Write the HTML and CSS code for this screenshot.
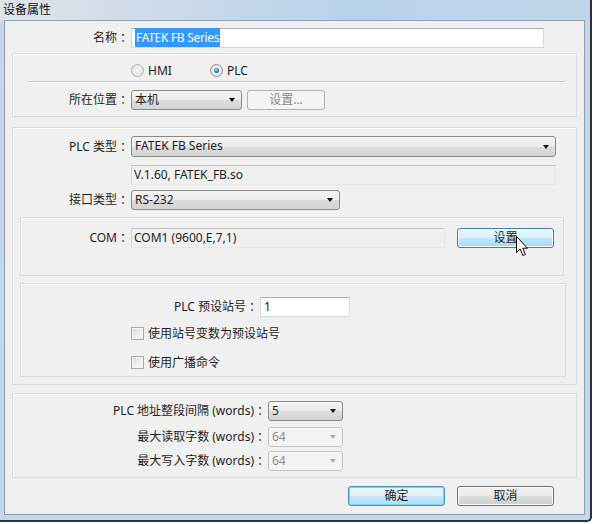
FILE: index.html
```html
<!DOCTYPE html>
<html lang="zh-CN">
<head>
    <meta charset="UTF-8">
    <meta name="viewport" content="width=device-width, initial-scale=1.0">
    <title>设备属性</title>
    <link rel="stylesheet" href="styles.css">
</head>
<body>
<div class="window">
    <div class="titlebar"><span class="title">设备属性</span></div>
    <div class="client">

        <div class="row name-row">
            <span class="lbl">名称<span class="colon">：</span></span>
            <div class="edit name-edit"><span class="selected">FATEK FB Series</span></div>
        </div>

        <div class="group g1">
            <div class="radios">
                <span class="radio"><i class="dot"></i>HMI</span>
                <span class="radio on"><i class="dot"></i>PLC</span>
            </div>
            <div class="sep"></div>
            <div class="row">
                <span class="lbl">所在位置<span class="colon">：</span></span>
                <div class="combo loc-combo">本机<i class="arrow"></i></div>
                <div class="btn disabled loc-btn">设置...</div>
            </div>
        </div>

        <div class="group g2">
            <div class="row tall">
                <span class="lbl">PLC 类型<span class="colon">：</span></span>
                <div class="combo plc-combo">FATEK FB Series<i class="arrow"></i></div>
            </div>
            <div class="row version-row">
                <span class="lbl"></span>
                <div class="readonly plc-combo">V.1.60, FATEK_FB.so</div>
            </div>
            <div class="row port-row">
                <span class="lbl">接口类型<span class="colon">：</span></span>
                <div class="combo port-combo">RS-232<i class="arrow"></i></div>
            </div>

            <div class="group inner com-group">
                <div class="row">
                    <span class="lbl">COM<span class="colon">：</span></span>
                    <div class="readonly com-box">COM1 (9600,E,7,1)</div>
                    <div class="btn hover com-btn">设置</div>
                </div>
                <svg class="cursor" width="13" height="21" viewBox="0 0 13 21">
                    <path d="M0.5 0.5 L0.5 16.5 L4.2 13 L6.8 19.5 L9.3 18.5 L6.8 12.2 L11.5 12.2 Z" fill="#fff" stroke="#000" stroke-width="1"/>
                </svg>
            </div>

            <div class="group inner station-group">
                <div class="row">
                    <span class="lbl">PLC 预设站号<span class="colon">：</span></span>
                    <div class="edit station-edit">1</div>
                </div>
                <div class="check first"><i class="box"></i>使用站号变数为预设站号</div>
                <div class="check second"><i class="box"></i>使用广播命令</div>
            </div>
        </div>

        <div class="group g3">
            <div class="row">
                <span class="lbl">PLC 地址整段间隔 (words)<span class="colon">：</span></span>
                <div class="combo words-combo">5<i class="arrow"></i></div>
            </div>
            <div class="row read-row">
                <span class="lbl">最大读取字数 (words)<span class="colon">：</span></span>
                <div class="combo disabled words-combo">64<i class="arrow"></i></div>
            </div>
            <div class="row write-row">
                <span class="lbl">最大写入字数 (words)<span class="colon">：</span></span>
                <div class="combo disabled words-combo">64<i class="arrow"></i></div>
            </div>
        </div>

        <div class="buttons">
            <div class="btn default">确定</div>
            <div class="btn">取消</div>
        </div>
    </div>
</div>
</body>
</html>
```

FILE: styles.css
```css
body {
    margin: 0;
    width: 600px;
    height: 524px;
    overflow: hidden;
    background-color: #ffffff;
    font-family: "Noto Sans", "Noto Sans CJK SC", sans-serif;
    font-size: 12px;
    color: #1e1e1e;
}
.window {
    width: 590px;
    height: 520px;
    background: linear-gradient(to bottom, #c9d6e4, #c3d8ec);
    border-right: 2px solid #2e3136;
    border-bottom: 2px solid #2e3136;
    border-bottom-right-radius: 5px;
    display: flex;
    flex-direction: column;
}
.titlebar {
    height: 20px;
    background: linear-gradient(to right, #dfe4ea 0%, #cfdbe8 25%, #b9d2ec 60%, #c2d6ea 100%);
    display: flex;
    align-items: center;
}
.title {
    padding-left: 3px;
    font-size: 12px;
    color: #111;
    line-height: 18px;
}
.client {
    box-sizing: border-box;
    width: 581px;
    height: 495px;
    margin-left: 4px;
    background-color: #f0f0f0;
    border: 1px solid #8d9eb0;
    padding-top: 7px;
    display: flex;
    flex-direction: column;
}
.row {
    display: flex;
    align-items: center;
    height: 20px;
    gap: 2px;
}
.row.tall {
    height: 21px;
}
.lbl {
    flex: none;
    text-align: right;
    white-space: nowrap;
    line-height: 20px;
}
.colon {
    margin-left: 3px;
    letter-spacing: -3px;
}
.name-row .lbl {
    width: 124px;
}
.group {
    box-sizing: border-box;
    margin: 0 7px;
    border: 1px solid #dcdcdc;
    box-shadow: inset 1px 1px 0 #fbfbfb;
}
.group .lbl {
    width: 116px;
}

/* edits */
.edit {
    box-sizing: border-box;
    height: 20px;
    background-color: #fff;
    border: 1px solid #d4dae2;
    border-top-color: #abadb3;
    padding-left: 3px;
    line-height: 18px;
}
.name-edit {
    width: 413px;
}
.selected {
    background-color: #3399ff;
    color: #fff;
    padding: 1px 1px;
    letter-spacing: -0.3px;
}
.readonly {
    box-sizing: border-box;
    height: 20px;
    border: 1px solid #e6e6e6;
    border-top-color: #c2c2c2;
    border-left-color: #d2d2d2;
    padding-left: 2px;
    line-height: 18px;
}

/* combos */
.combo {
    box-sizing: border-box;
    position: relative;
    height: 100%;
    border: 1px solid #8a8a8a;
    border-radius: 3px;
    background: linear-gradient(to bottom, #f4f4f4 0%, #ebebeb 50%, #dcdcdc 51%, #d4d4d4 100%);
    padding-left: 3px;
    line-height: 18px;
}
.combo .arrow {
    position: absolute;
    right: 6px;
    top: 50%;
    margin-top: -2px;
    width: 0;
    height: 0;
    border-left: 3.5px solid transparent;
    border-right: 3.5px solid transparent;
    border-top: 4px solid #111;
}
.combo.disabled {
    background: #f4f4f4;
    border-color: #c3c6c9;
    color: #8a8a8a;
}
.combo.disabled .arrow {
    border-top-color: #a9a9a9;
}

/* buttons */
.btn {
    box-sizing: border-box;
    height: 20px;
    border: 1px solid #707070;
    border-radius: 3px;
    background: linear-gradient(to bottom, #f2f2f2 0%, #ebebeb 50%, #dddddd 51%, #cfcfcf 100%);
    text-align: center;
    line-height: 18px;
    box-shadow: inset 0 0 0 1px #fcfcfc;
}
.btn.disabled {
    border-color: #adb2b5;
    background: #f4f4f4;
    color: #8b8b8b;
    box-shadow: none;
}
.btn.hover {
    border-color: #3c7fb1;
    background: linear-gradient(to bottom, #eaf6fd 0%, #d9f0fc 50%, #bee6fd 51%, #a7d9f5 100%);
}
.btn.default {
    border-color: #3c96c4;
    background: linear-gradient(to bottom, #eaf6fd 0%, #dff1fb 50%, #c7e6f7 51%, #b4dcf2 100%);
    box-shadow: inset 0 0 0 1px #7fd3f5;
}

/* group 1 */
.g1 {
    margin-top: 5px;
    padding: 8px 0 6px;
}
.radios {
    height: 16px;
    display: flex;
    align-items: center;
    padding-left: 118px;
}
.radio {
    display: flex;
    align-items: center;
    gap: 4px;
    width: 79px;
}
.radio .dot {
    box-sizing: border-box;
    width: 13px;
    height: 13px;
    border-radius: 50%;
    border: 1px solid #b0b0b0;
    background: radial-gradient(circle, #f3f3f3 0%, #e2e2e2 100%);
    position: relative;
}
.radio.on .dot {
    border-color: #8f8f8f;
}
.radio.on .dot::after {
    content: "";
    position: absolute;
    left: 3px;
    top: 3px;
    width: 5px;
    height: 5px;
    border-radius: 50%;
    background: radial-gradient(circle at 40% 35%, #9bd2f6 0%, #3576b7 60%, #1e4f8a 100%);
}
.sep {
    margin: 3px 11px 7px 15px;
    height: 1px;
    background-color: #c8c8c8;
    border-bottom: 1px solid #fdfdfd;
}
.loc-combo {
    width: 111px;
}
.loc-btn {
    width: 78px;
    margin-left: 3px;
}

/* group 2 */
.g2 {
    margin-top: 10px;
    padding: 8px 0 7px;
}
.plc-combo {
    width: 425px;
}
.version-row {
    margin-top: 8px;
}
.port-row {
    margin-top: 5px;
}
.port-combo {
    width: 209px;
}
.inner {
    margin: 0 12px 0 7px;
    position: relative;
}
.com-group {
    margin-top: 7px;
    padding: 10px 0 27px;
}
.com-group .lbl {
    width: 108px;
}
.com-box {
    width: 314px;
}
.com-btn {
    width: 97px;
    margin-left: 10px;
}
.cursor {
    position: absolute;
    left: 495px;
    top: 18px;
}
.station-group {
    margin-top: 7px;
    margin-right: 10px;
    padding: 13px 0 6px;
}
.station-group .lbl {
    width: 237px;
}
.station-edit {
    width: 90px;
}
.check {
    display: flex;
    align-items: center;
    gap: 4px;
    height: 16px;
    padding-left: 110px;
}
.check.first {
    margin-top: 8px;
}
.check.second {
    margin-top: 13px;
}
.check .box {
    box-sizing: border-box;
    width: 13px;
    height: 13px;
    border: 1px solid #a8a8a8;
    background: linear-gradient(135deg, #dcdcdc, #fbfbfb);
    box-shadow: inset 0 0 0 1px #f4f4f4;
}

/* group 3 */
.g3 {
    margin-top: 8px;
    padding: 7px 0 6px;
}
.g3 .lbl {
    width: 253px;
}
.words-combo {
    width: 75px;
}
.read-row {
    margin-top: 6px;
}
.write-row {
    margin-top: 4px;
}

/* bottom buttons */
.buttons {
    margin-top: 8px;
    display: flex;
    justify-content: flex-end;
    gap: 12px;
    padding-right: 30px;
}
.buttons .btn {
    width: 97px;
}
```
